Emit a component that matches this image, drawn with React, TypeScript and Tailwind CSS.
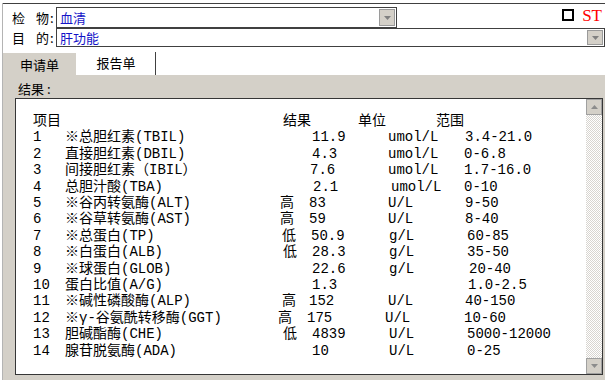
import React from "react";

type Row = {
  n: string;
  name: string;
  flag: string;
  val: string;
  unit: string;
  range: string;
  fc: string;
  vc: string;
  uc: string;
  rc: string;
};

const rows: Row[] = [
  { n: "1", name: "※总胆红素(TBIL)", flag: "", val: "11.9", unit: "umol/L", range: "3.4-21.0", fc: "", vc: "pl-[5px]", uc: "pl-[3px]", rc: "pl-[1px]" },
  { n: "2", name: "直接胆红素(DBIL)", flag: "", val: "4.3", unit: "umol/L", range: "0-6.8", fc: "", vc: "pl-[5px]", uc: "pl-[3px]", rc: "pl-[0px]" },
  { n: "3", name: "间接胆红素（IBIL）", flag: "", val: "7.6", unit: "umol/L", range: "1.7-16.0", fc: "", vc: "pl-[3px]", uc: "pl-[3px]", rc: "pl-[0px]" },
  { n: "4", name: "总胆汁酸(TBA)", flag: "", val: "2.1", unit: "umol/L", range: "0-10", fc: "", vc: "pl-[6px]", uc: "pl-[6px]", rc: "pl-[0px]" },
  { n: "5", name: "※谷丙转氨酶(ALT)", flag: "高", val: "83", unit: "U/L", range: "9-50", fc: "pl-[2px]", vc: "pl-[2px]", uc: "pl-[3px]", rc: "pl-[1px]" },
  { n: "6", name: "※谷草转氨酶(AST)", flag: "高", val: "59", unit: "U/L", range: "8-40", fc: "pl-[2px]", vc: "pl-[2px]", uc: "pl-[3px]", rc: "pl-[1px]" },
  { n: "7", name: "※总蛋白(TP)", flag: "低", val: "50.9", unit: "g/L", range: "60-85", fc: "pl-[4px]", vc: "pl-[4px]", uc: "pl-[4px]", rc: "pl-[3px]" },
  { n: "8", name: "※白蛋白(ALB)", flag: "低", val: "28.3", unit: "g/L", range: "35-50", fc: "pl-[5px]", vc: "pl-[5px]", uc: "pl-[4px]", rc: "pl-[3px]" },
  { n: "9", name: "※球蛋白(GLOB)", flag: "", val: "22.6", unit: "g/L", range: "20-40", fc: "", vc: "pl-[5px]", uc: "pl-[4px]", rc: "pl-[5px]" },
  { n: "10", name: "蛋白比值(A/G)", flag: "", val: "1.3", unit: "", range: "1.0-2.5", fc: "", vc: "pl-[5px]", uc: "pl-[4px]", rc: "pl-[4px]" },
  { n: "11", name: "※碱性磷酸酶(ALP)", flag: "高", val: "152", unit: "U/L", range: "40-150", fc: "pl-[4px]", vc: "pl-[2px]", uc: "pl-[3px]", rc: "pl-[1px]" },
  { n: "12", name: "※γ-谷氨酰转移酶(GGT)", flag: "高", val: "175", unit: "U/L", range: "10-60", fc: "pl-[0px]", vc: "pl-[0px]", uc: "pl-[0px]", rc: "pl-[0px]" },
  { n: "13", name: "胆碱酯酶(CHE)", flag: "低", val: "4839", unit: "U/L", range: "5000-12000", fc: "pl-[5px]", vc: "pl-[5px]", uc: "pl-[4px]", rc: "pl-[3px]" },
  { n: "14", name: "腺苷脱氨酶(ADA)", flag: "", val: "10", unit: "U/L", range: "0-25", fc: "", vc: "pl-[5px]", uc: "pl-[4px]", rc: "pl-[3px]" },
];

function Tri({ up = false, color = "#808080" }: { up?: boolean; color?: string }) {
  return (
    <svg width="7" height="4" viewBox="0 0 7 4">
      {up ? <polygon points="0,4 7,4 3.5,0" fill={color} /> : <polygon points="0,0 7,0 3.5,4" fill={color} />}
    </svg>
  );
}

function DropBtn() {
  return (
    <div className="w-[16px] h-full bg-[#d4d0c8] border border-[#9a9a9a] flex items-center justify-center">
      <Tri />
    </div>
  );
}

export default function App() {
  return (
    <div className="w-[605px] h-[380px] bg-white overflow-hidden font-['Noto_Sans_CJK_SC',sans-serif] text-black">
      <div className="h-[3px]" />
      <div className="ml-[2px] h-[377px] border-l border-[#b4b4b4] flex flex-col">
        {/* header form */}
        <div className="border-t border-[#404040] w-full">
          {/* row 1 */}
          <div className="h-[24px] flex items-start">
            <div className="mt-[3px] h-[21px] w-[53px] pl-[9px] flex items-center text-[13px] leading-none">
              <span>检</span>
              <span className="ml-[11px]">物</span>
              <span className="ml-[1px]">:</span>
            </div>
            <div className="mt-[3px] h-[21px] w-[341px] border border-[#404040] flex items-center p-[1px]">
              <span className="pl-[2px] text-[13px] text-[#1414c8] leading-none">血清</span>
              <div className="ml-auto h-full">
                <DropBtn />
              </div>
            </div>
            <div className="flex-1" />
            <div className="mt-[5px] w-[12px] h-[12px] border-2 border-black bg-white" />
            <div className="ml-[8px] mr-[3px] mt-[2px] text-[17px] leading-[20px] text-[#ff0000] font-['Liberation_Serif',serif]">
              ST
            </div>
          </div>
          {/* row 2 */}
          <div className="h-[19px] flex items-start">
            <div className="h-[19px] w-[53px] pl-[9px] flex items-center text-[13px] leading-none">
              <span>目</span>
              <span className="ml-[11px]">的</span>
              <span className="ml-[1px]">:</span>
            </div>
            <div className="h-[19px] flex-1 border border-[#404040] flex items-center p-[1px]">
              <span className="pl-[2px] text-[13px] text-[#1414c8] leading-none">肝功能</span>
              <div className="ml-auto h-full">
                <DropBtn />
              </div>
            </div>
          </div>
        </div>
        {/* tabs */}
        <div className="mt-[5px] h-[23px] flex items-stretch">
          <div className="w-[74px] bg-[#d4d0c8] border-t border-r border-white flex items-center justify-center text-[13px] pt-[1px]">
            申请单
          </div>
          <div className="w-[79px] bg-white border-r border-[#404040] flex items-center justify-center text-[13px] pb-[2px]">
            报告单
          </div>
          <div className="flex-1 bg-white" />
        </div>
        {/* panel */}
        <div className="flex-1 bg-[#d4d0c8] flex flex-col">
          <div className="pt-[6px] pl-[15px] text-[13px] leading-[16px]">
            结果<span className="ml-[3px]">:</span>
          </div>
          <div className="mt-[1px] ml-[12px] w-[588px] h-[277px] bg-white border border-[#363636] flex">
            <div className="flex-1 pl-[17px] pt-[14px] text-[14px] leading-[16.4px] font-['Liberation_Mono','Noto_Sans_CJK_SC',monospace] whitespace-pre">
              <div className="flex">
                <div className="w-[250px]">项目</div>
                <div className="w-[75px]">结果</div>
                <div className="w-[78px]">单位</div>
                <div>范围</div>
              </div>
              {rows.map((r) => (
                <div key={r.n} className="grid grid-cols-[32px_213px_29px_78px_79px_1fr]">
                  <div>{r.n}</div>
                  <div>{r.name}</div>
                  <div className={r.fc}>{r.flag}</div>
                  <div className={r.vc}>{r.val}</div>
                  <div className={r.uc}>{r.unit}</div>
                  <div className={r.rc}>{r.range}</div>
                </div>
              ))}
            </div>
            <div className="w-[16px] flex flex-col">
              <div className="h-[16px] bg-[#d4d0c8] border border-[#a0a0a0] flex items-center justify-center">
                <Tri up color="#8c8c8c" />
              </div>
              <div className="flex-1 bg-[image:repeating-conic-gradient(#d8d5d0_0%_25%,#ffffff_0%_50%)] bg-[length:2px_2px]" />
              <div className="h-[16px] bg-[#d4d0c8] border border-[#a0a0a0] flex items-center justify-center">
                <Tri color="#8c8c8c" />
              </div>
            </div>
          </div>
        </div>
      </div>
    </div>
  );
}
